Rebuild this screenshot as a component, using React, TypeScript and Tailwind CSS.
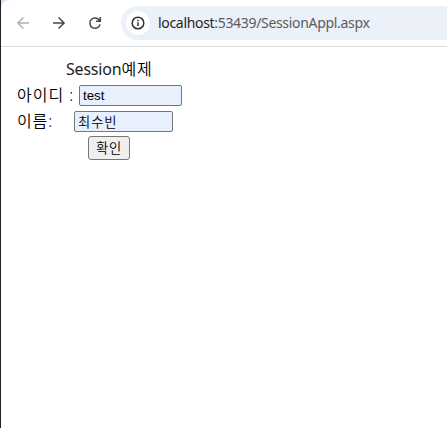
import type { ReactNode } from "react";

function ToolIcon({ children, className }: { children: ReactNode; className: string }) {
  return (
    <svg viewBox="0 0 16 16" className={`size-4 shrink-0 ${className}`} fill="none" stroke="currentColor" strokeWidth="1.5">
      {children}
    </svg>
  );
}

function Toolbar() {
  return (
    <header className="flex h-[47px] items-start border-b border-[#dcdde0] pt-1.5">
      <div className="flex h-[34px] items-center gap-5 pl-3.5">
        <ToolIcon className="text-[#aeafb1]">
          <path d="M14 8H3M8.4 2.5L2.9 8l5.5 5.5" />
        </ToolIcon>
        <ToolIcon className="text-[#474747]">
          <path d="M2 8h11M7.6 2.5L13.1 8l-5.5 5.5" />
        </ToolIcon>
        <ToolIcon className="text-[#474747]">
          <path d="M13.1 9.4A5.2 5.2 0 1 1 12.5 5.4M13.3 2v4.3H9" />
        </ToolIcon>
      </div>
      <div className="ml-[18px] flex h-[34px] flex-1 items-center rounded-l-full bg-[#ecf0f9] pl-[5px]">
        <span className="flex size-6 items-center justify-center rounded-full bg-white">
          <ToolIcon className="text-[#303134]">
            <circle cx="8" cy="8" r="5.8" />
            <path d="M8 7.3v3.6M8 4.8v1.5" />
          </ToolIcon>
        </span>
        <span className="ml-2 whitespace-nowrap font-['Noto_Sans',sans-serif] text-[14px] leading-5 tracking-[-0.32px] text-[#5a5c60]">
          <span className="text-[#1f1f1f]">localhost</span>:53439/SessionAppl.aspx
        </span>
      </div>
    </header>
  );
}

export default function App() {
  return (
    <div className="h-[428px] overflow-hidden border-l border-[#202124] bg-[#d3e3fd]">
      <div className="h-full rounded-tl-lg bg-white">
        <Toolbar />
        <form
          className="flex flex-col items-start pt-2.5 pl-[15px] font-['Noto_Sans','Noto_Sans_CJK_KR',sans-serif] text-base leading-6 text-black"
          onSubmit={(e) => e.preventDefault()}
        >
          <p className="ml-[50px] whitespace-nowrap tracking-[-0.2px] text-[#1c1c1c]">
            Session<span className="font-[350] tracking-[0.9px] text-black">예제</span>
          </p>
          <div className="mt-1 flex h-[21px] items-center">
            <label htmlFor="uid" className="-mt-0.5 w-[63px] pl-px font-[350] tracking-[1px] whitespace-nowrap">아이디 :</label>
            <input
              id="uid"
              defaultValue="test"
              className="h-[21px] w-[103px] rounded-[2px] border border-[#767676] bg-[#e8f0fe] px-[3px] font-['Liberation_Sans',sans-serif] text-[13.333px] leading-4"
            />
          </div>
          <div className="mt-[5px] flex h-[21px] items-center">
            <label htmlFor="uname" className="-mt-0.5 w-[58px] pl-px font-[350] tracking-[0.9px] whitespace-nowrap">이름:</label>
            <input
              id="uname"
              defaultValue="최수빈"
              className="h-[21px] w-[99px] rounded-[2px] border border-[#767676] bg-[#e8f0fe] px-[3px] font-['Noto_Sans_CJK_KR',sans-serif] text-[13.333px] leading-4 font-[350] tracking-[0.9px]"
            />
          </div>
          <button className="mt-1 ml-[72px] h-6 w-[42px] rounded-[3px] border border-[#767676] bg-[#efefef] font-['Noto_Sans_CJK_KR',sans-serif] text-[13.333px] leading-[22px] font-[350] tracking-[0.7px] whitespace-nowrap">
            확인
          </button>
        </form>
      </div>
    </div>
  );
}
